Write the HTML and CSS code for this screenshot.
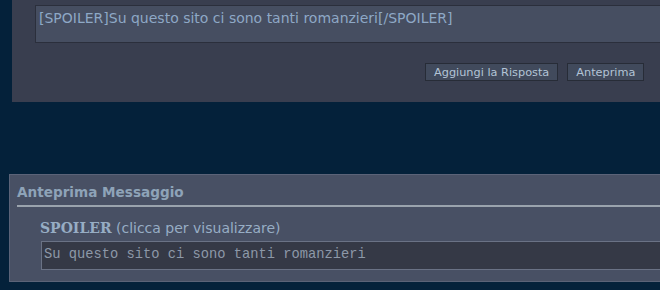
FILE: index.html
```html
<!DOCTYPE html>
<html lang="it">
<head>
    <meta charset="UTF-8">
    <title>Anteprima Messaggio</title>
    <link rel="stylesheet" href="styles.css">
</head>
<body>
    <div id="wrap">
        <div class="reply">
            <div class="reply-box">
                <div class="textarea">[SPOILER]Su questo sito ci sono tanti romanzieri[/SPOILER]</div>
            </div>
            <div class="buttons">
                <button class="btn">Aggiungi la Risposta</button>
                <button class="btn">Anteprima</button>
            </div>
        </div>

        <div class="preview">
            <h3 class="preview-title">Anteprima Messaggio</h3>
            <div class="preview-body">
                <div class="spoiler-head"><b>SPOILER</b> (clicca per visualizzare)</div>
                <div class="spoiler-box">Su questo sito ci sono tanti romanzieri</div>
            </div>
        </div>
    </div>
</body>
</html>
```

FILE: styles.css
```css
*{margin:0; padding:0; box-sizing:border-box;}
html, body{height:100%;}
body{
    background:#04213a;
    overflow:hidden;
    font-family: "DejaVu Sans", Verdana, sans-serif;
}
#wrap{width:720px;}

.reply{
    margin-left:12px;
    height:102px;
    background:#393e4f;
    padding-top:5px;
}
.reply-box{padding-left:23px;}
.textarea{
    height:38px;
    background:#464e61;
    border:1px solid #2b2f3c;
    color:#8ea8c6;
    font-size:14px;
    padding:4px 3px;
    line-height:17px;
}
.buttons{
    display:flex;
    gap:9px;
    margin-top:20px;
    padding-left:413px;
}
.btn{
    height:18px;
    background:#414a5c;
    border:1px solid #272c37;
    color:#b3c4d6;
    font-family: "DejaVu Sans", Verdana, sans-serif;
    font-size:11.3px;
    padding:0 8px;
    line-height:15px;
}

.preview{
    margin-top:72px;
    margin-left:9px;
    height:108px;
    background:#485064;
    border:1px solid #5b6378;
    border-right:none;
}
.preview-title{
    margin-left:7px;
    padding-top:9px;
    height:32px;
    border-bottom:2px solid #9aa3ad;
    color:#8ea3b8;
    font-size:13.6px;
    font-weight:bold;
}
.preview-body{padding:12px 0 0 30px;}
.spoiler-head{
    color:#97adc4;
    font-size:14px;
    line-height:18px;
}
.spoiler-head b{
    font-family: "DejaVu Serif", Georgia, serif;
    font-size:14px;
}
.spoiler-box{
    margin-top:4px;
    margin-left:1px;
    height:29px;
    background:#353946;
    border:1px solid #6a7285;
    border-right:none;
    color:#8d98a8;
    font-family: "Liberation Mono", "Courier New", monospace;
    font-size:13.75px;
    padding:5px 0 0 2px;
}
```
